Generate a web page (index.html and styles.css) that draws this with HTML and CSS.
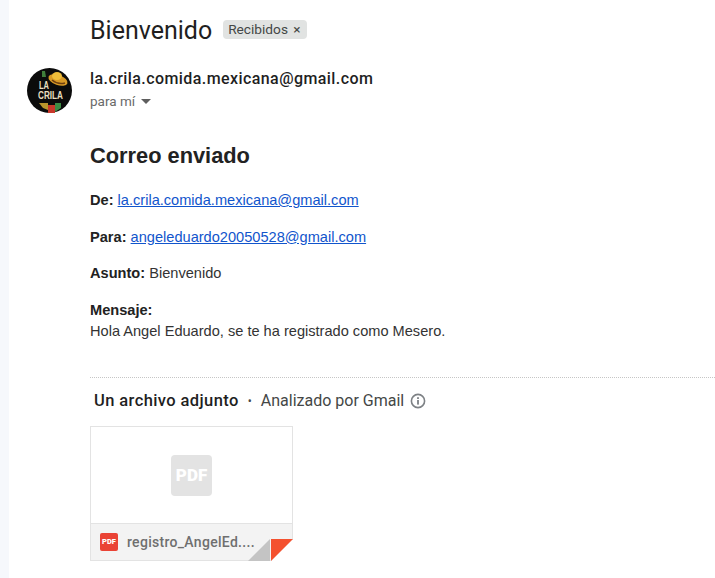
FILE: index.html
```html
<!DOCTYPE html>
<html lang="es">
<head>
    <meta charset="UTF-8">
    <meta name="viewport" content="width=device-width, initial-scale=1.0">
    <title>Bienvenido</title>
    <link rel="stylesheet" href="styles.css">
</head>
<body>
    <div class="strip"></div>
    <main class="mail">
        <div class="subjectRow">
            <h1>Bienvenido</h1>
            <span class="label">Recibidos <span class="labelClose">×</span></span>
        </div>
        <div class="senderRow">
            <div class="avatar">
                <svg viewBox="0 0 45 45" width="45" height="45">
                    <circle cx="22.5" cy="22.5" r="22.5" fill="#0b0b0b"/>
                    <ellipse cx="31" cy="12" rx="10" ry="5" fill="#d99a26" transform="rotate(20 31 12)"/>
                    <ellipse cx="30" cy="8" rx="5" ry="4" fill="#efbd3a"/>
                    <path d="M25 12 q6 5 13 3" stroke="#6e3f10" stroke-width="1.4" fill="none"/>
                    <path d="M15 3h3l1 6h-4z" fill="#3f7d3a"/>
                    <text class="avatarLa" x="12" y="21" textLength="10" lengthAdjust="spacingAndGlyphs">LA</text>
                    <text class="avatarCrila" x="11" y="31" textLength="25" lengthAdjust="spacingAndGlyphs">CRILA</text>
                    <path d="M12 35h9v7l-5-2z" fill="#b9962c"/>
                    <path d="M21 37h7v8h-7z" fill="#c8382b"/>
                    <path d="M28 35h6v5l-6 4z" fill="#3d8b45"/>
                </svg>
            </div>
            <div class="senderInfo">
                <div class="senderName">la.crila.comida.mexicana@gmail.com</div>
                <div class="toMe">para mí <span class="caret"></span></div>
            </div>
        </div>
        <div class="body">
            <h2>Correo enviado</h2>
            <p><strong>De:</strong> <a href="#">la.crila.comida.mexicana@gmail.com</a></p>
            <p><strong>Para:</strong> <a href="#">angeleduardo20050528@gmail.com</a></p>
            <p><strong>Asunto:</strong> Bienvenido</p>
            <p><strong>Mensaje:</strong><br>Hola Angel Eduardo, se te ha registrado como Mesero.</p>
        </div>
        <div class="attachments">
            <div class="attachHead">
                <span class="attachCount">Un archivo adjunto</span>
                <span class="dot">•</span>
                <span class="scanned">Analizado por Gmail</span>
                <svg class="info" viewBox="0 0 16 16" width="16" height="16">
                    <circle cx="8" cy="8" r="6.6" fill="none" stroke="#7d8185" stroke-width="1.6"/>
                    <rect x="7.1" y="7" width="1.8" height="4.6" fill="#7d8185"/>
                    <rect x="7.1" y="4.2" width="1.8" height="1.8" fill="#7d8185"/>
                </svg>
            </div>
            <div class="card">
                <div class="preview">
                    <div class="pdfBig">PDF</div>
                </div>
                <div class="cardFoot">
                    <span class="pdfSmall">PDF</span>
                    <span class="fileName">registro_AngelEd....</span>
                </div>
                <svg class="fold" viewBox="0 0 45 22" width="45" height="22">
                    <path d="M23 22 L45 0 V22 Z" fill="#fff"/>
                    <path d="M0 22 L22 0 V22 Z" fill="#c4c4c4"/>
                    <path d="M23 0 H45 L23 22 Z" fill="#f4512f"/>
                </svg>
            </div>
        </div>
    </main>
</body>
</html>
```

FILE: styles.css
```css
* {
    margin: 0;
    padding: 0;
    box-sizing: border-box;
}
html, body {
    height: 100%;
    overflow: hidden;
}
body {
    display: flex;
    background-color: #fff;
    color: #1f1f1f;
    font-family: "Liberation Sans", Arial, sans-serif;
}
.strip {
    width: 9px;
    flex-shrink: 0;
    background-color: #f6f8fc;
}
.mail {
    flex: 1;
    min-width: 0;
}
.subjectRow {
    display: flex;
    align-items: center;
    gap: 11px;
    height: 38px;
    margin-top: 11px;
    padding-left: 81px;
}
h1 {
    font-family: Roboto, sans-serif;
    font-size: 25px;
    font-weight: 400;
    color: #1f1f1f;
}
.label {
    margin-bottom: 2px;
    padding: 1px 6px 1px 5px;
    border-radius: 4px;
    background-color: #e1e3e2;
    color: #444746;
    font-family: Roboto, sans-serif;
    font-size: 13.7px;
    line-height: 17px;
}
.labelClose {
    margin-left: 2px;
}
.senderRow {
    display: flex;
    gap: 18px;
    margin-top: 19px;
    padding-left: 18px;
}
.avatar {
    width: 45px;
    height: 45px;
}
.avatarLa,
.avatarCrila {
    fill: #e9dfc0;
    font-family: "Liberation Sans", sans-serif;
    font-weight: 700;
}
.avatarLa {
    font-size: 11px;
}
.avatarCrila {
    font-size: 10px;
}
.senderName {
    margin-top: 1px;
    font-family: Roboto, sans-serif;
    font-size: 16px;
    font-weight: 500;
    letter-spacing: .42px;
    line-height: 20px;
    color: #1f1f1f;
}
.toMe {
    margin-top: 4px;
    font-family: Roboto, sans-serif;
    font-size: 13.5px;
    line-height: 16px;
    color: #6a6a6a;
}
.caret {
    display: inline-block;
    margin-left: 3px;
    vertical-align: 2px;
    border-left: 5px solid transparent;
    border-right: 5px solid transparent;
    border-top: 5px solid #5e5e5e;
}
.body {
    margin-top: 30px;
    padding-left: 81px;
    font-size: 14.6px;
    color: #333;
}
h2 {
    margin-bottom: 21px;
    font-size: 21.8px;
    line-height: 26px;
    font-weight: 700;
    color: #222;
}
.body strong {
    color: #222;
}
.body p {
    margin-bottom: 15.6px;
    line-height: 21px;
}
.body a {
    color: #1155cc;
}
.attachments {
    margin-top: 35px;
    margin-left: 81px;
    border-top: 1px dotted #c6c6c6;
}
.attachHead {
    display: flex;
    align-items: center;
    height: 48px;
    padding: 0 0 2px 4px;
    font-family: Roboto, sans-serif;
    font-size: 16px;
    color: #444746;
}
.attachCount {
    font-size: 16.5px;
    font-weight: 500;
    letter-spacing: .4px;
    color: #1f1f1f;
}
.dot {
    margin: 0 9px;
    font-size: 12px;
}
.info {
    margin-left: 6px;
}
.card {
    position: relative;
    width: 203px;
    height: 135px;
    border: 1px solid #e3e3e3;
}
.preview {
    display: flex;
    align-items: center;
    justify-content: center;
    height: 97px;
    border-bottom: 1px solid #e3e3e3;
}
.pdfBig {
    display: flex;
    align-items: center;
    justify-content: center;
    width: 41px;
    height: 41px;
    margin-top: 1px;
    border-radius: 4px;
    background-color: #e3e3e3;
    color: #fff;
    font-family: Roboto, sans-serif;
    font-size: 17px;
    font-weight: 900;
}
.cardFoot {
    display: flex;
    align-items: center;
    gap: 9px;
    height: 36px;
    padding-left: 9px;
    background-color: #f3f3f3;
}
.pdfSmall {
    display: flex;
    align-items: center;
    justify-content: center;
    width: 18px;
    height: 18px;
    border-radius: 2px;
    background-color: #ea4335;
    color: #fff;
    font-family: Roboto, sans-serif;
    font-size: 7.5px;
    font-weight: 900;
}
.fileName {
    font-family: Roboto, sans-serif;
    font-size: 14px;
    font-weight: 500;
    letter-spacing: .3px;
    color: #6f6f6f;
}
.fold {
    position: absolute;
    right: -1px;
    bottom: -1px;
}
```
